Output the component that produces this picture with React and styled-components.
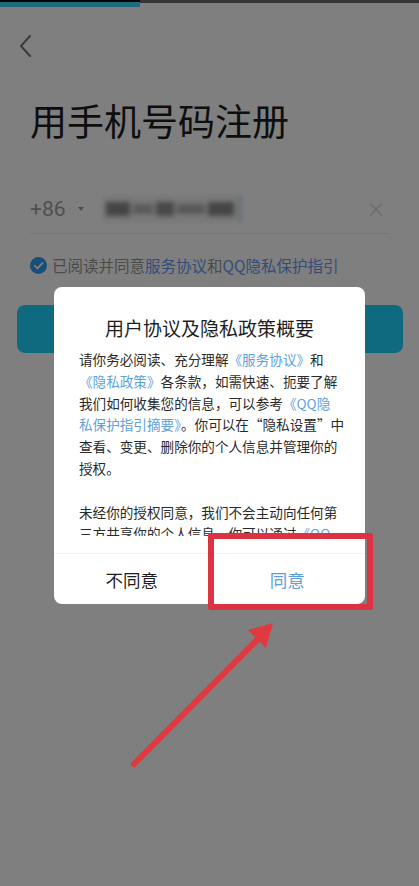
import React from 'react'
import styled, { createGlobalStyle } from 'styled-components'

const GlobalStyle = createGlobalStyle`
  html, body {
    margin: 0;
    padding: 0;
    background: #fff;
  }
  body {
    font-family: "Noto Sans CJK SC", "Noto Sans", sans-serif;
  }
`

const Screen = styled.div`
  position: relative;
  width: 419px;
  height: 886px;
  overflow: hidden;
  background: #fff;
`

const Progress = styled.div`
  display: flex;
  height: 7px;
`

const ProgressFill = styled.div`
  width: 140px;
  background: #36d6fa;
  border-top: 2px solid #0a0a0a;
`

const ProgressRest = styled.div`
  flex: 1;
  border-top: 3px solid #6a6a6a;
`

const Page = styled.div`
  padding: 0 29px 0 30px;
`

const BackButton = styled.div`
  display: flex;
  width: 20px;
  height: 26px;
  margin: 26px 0 0 -13px;
`

const Title = styled.h1`
  margin: 39px 0 0;
  font-size: 37px;
  line-height: 44px;
  font-weight: 400;
  color: #1c1c1c;
  letter-spacing: 0;
`

const PhoneRow = styled.div`
  display: flex;
  align-items: center;
  height: 48px;
  margin-top: 43px;
  border-bottom: 1px solid #ececec;
`

const Code = styled.span`
  font-family: Roboto, "Noto Sans", sans-serif;
  font-size: 21px;
  color: #a0a0a0;
`

const Caret = styled.span`
  width: 0;
  height: 0;
  margin-left: 12px;
  border-left: 3.5px solid transparent;
  border-right: 3.5px solid transparent;
  border-top: 4px solid #9a9a9a;
`

const Masked = styled.div`
  position: relative;
  width: 140px;
  height: 28px;
  margin-left: 18px;
  display: flex;
  align-items: center;
  gap: 3px;
  padding: 0 4px;
  box-sizing: border-box;
  background: #f2f2f2;
  filter: blur(2.5px);
  border-right: 3px solid #b8dfee;
`

const Patch = styled.span`
  height: ${p => p.$h || 10}px;
  width: ${p => p.$w}px;
  background: ${p => p.$c || '#9a9a9a'};
`

const Clear = styled.span`
  margin-left: auto;
  margin-right: 4px;
  font-size: 20px;
  line-height: 1;
  color: #d6d6d6;
`

const AgreeRow = styled.div`
  display: flex;
  align-items: center;
  gap: 5px;
  margin-top: 20px;
  height: 22px;
  font-size: 15.5px;
  color: #969696;
`

const Link = styled.span`
  color: ${p => p.$color || '#6a98f2'};
`

const NextButton = styled.div`
  margin: 29px -13px 0;
  height: 48px;
  border-radius: 8px;
  background: #20d5fe;
`

const Mask = styled.div`
  position: absolute;
  inset: 0;
  background: rgba(0, 0, 0, 0.5);
  display: flex;
  justify-content: center;
  align-items: flex-start;
  padding-top: 287px;
`

const Dialog = styled.div`
  width: 311px;
  height: 317px;
  background: #fff;
  border-radius: 8px;
  display: flex;
  flex-direction: column;
  overflow: hidden;
`

const DialogTitle = styled.div`
  margin-top: 28px;
  text-align: center;
  font-size: 19px;
  line-height: 26px;
  color: #1e1e1e;
`

const DialogBody = styled.div`
  margin-top: 8px;
  height: 187px;
  overflow: hidden;
  padding: 0 25px;
  font-size: 13.6px;
  line-height: 21.8px;
  color: #2a2a2a;
`

const Line = styled.div`
  white-space: nowrap;
  height: 21.8px;
`

const Actions = styled.div`
  display: flex;
  height: 50px;
  margin-top: 17px;
  border-top: 1px solid #f2f2f2;
`

const Action = styled.div`
  flex: 1;
  display: flex;
  align-items: center;
  justify-content: center;
  font-size: 17.5px;
  color: ${p => (p.$primary ? '#5e9ed8' : '#1e1e1e')};
`

const Highlight = styled.div`
  position: absolute;
  left: 208px;
  top: 533px;
  width: 165px;
  height: 77px;
  box-sizing: border-box;
  border: 6px solid #dc3342;
  border-radius: 2px;
`

const ArrowLayer = styled.svg`
  position: absolute;
  inset: 0;
  width: 419px;
  height: 886px;
  pointer-events: none;
`

const blue = '#5f9fdc'

export default function App() {
  return (
    <Screen>
      <GlobalStyle />
      <Progress>
        <ProgressFill />
        <ProgressRest />
      </Progress>
      <Page>
        <BackButton>
          <svg width="20" height="26" viewBox="0 0 20 26">
            <polyline points="13,3 4,13 13,23" fill="none" stroke="#777" strokeWidth="2" strokeLinecap="round" strokeLinejoin="round" />
          </svg>
        </BackButton>
        <Title>用手机号码注册</Title>
        <PhoneRow>
          <Code>+86</Code>
          <Caret />
          <Masked>
            <Patch $w={24} $h={14} $c="#8a8a8a" />
            <Patch $w={20} $h={10} $c="#b4b4b4" />
            <Patch $w={18} $h={14} $c="#909090" />
            <Patch $w={28} $h={10} $c="#b0b0b0" />
            <Patch $w={26} $h={14} $c="#8c8c8c" />
          </Masked>
          <Clear>×</Clear>
        </PhoneRow>
        <AgreeRow>
          <svg width="17" height="17" viewBox="0 0 17 17">
            <circle cx="8.5" cy="8.5" r="8.5" fill="#2f9ff0" />
            <polyline points="4.8,8.8 7.6,11.4 12.4,6.2" fill="none" stroke="#fff" strokeWidth="1.8" strokeLinecap="round" strokeLinejoin="round" />
          </svg>
          <span>
            已阅读并同意<Link>服务协议</Link>和<Link>QQ隐私保护指引</Link>
          </span>
        </AgreeRow>
        <NextButton />
      </Page>

      <Mask>
        <Dialog>
          <DialogTitle>用户协议及隐私政策概要</DialogTitle>
          <DialogBody>
            <Line>请你务必阅读、充分理解<Link $color={blue}>《服务协议》</Link>和</Line>
            <Line><Link $color={blue}>《隐私政策》</Link>各条款，如需快速、扼要了解</Line>
            <Line>我们如何收集您的信息，可以参考<Link $color={blue}>《QQ隐</Link></Line>
            <Line><Link $color={blue}>私保护指引摘要》</Link>。你可以在“隐私设置”中</Line>
            <Line>查看、变更、删除你的个人信息并管理你的</Line>
            <Line>授权。</Line>
            <Line />
            <Line>未经你的授权同意，我们不会主动向任何第</Line>
            <Line>三方共享你的个人信息，你可以通过<Link $color={blue}>《QQ</Link></Line>
          </DialogBody>
          <Actions>
            <Action>不同意</Action>
            <Action $primary>同意</Action>
          </Actions>
        </Dialog>
      </Mask>

      <Highlight />
      <ArrowLayer viewBox="0 0 419 886">
        <line x1="134" y1="764" x2="260" y2="637" stroke="#e0393f" strokeWidth="6" strokeLinecap="round" />
        <polygon points="273,623 266,648 248,630" fill="#e0393f" />
      </ArrowLayer>
    </Screen>
  )
}
